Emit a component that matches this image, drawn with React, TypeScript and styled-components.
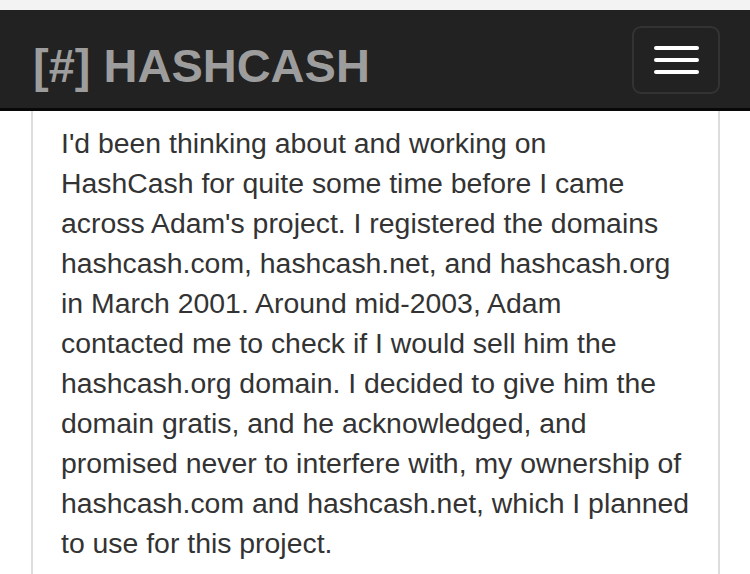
import React from "react";
import styled, { createGlobalStyle } from "styled-components";

const Global = createGlobalStyle`
  html, body { margin: 0; padding: 0; background: #ffffff; }
  body { font-family: "Liberation Sans", Arial, Helvetica, sans-serif; overflow: hidden; }
`;

const TopStrip = styled.div`
  height: 10px;
  background: #f3f3f3;
`;

const Navbar = styled.header`
  height: 98px;
  background: #222222;
  border-bottom: 3px solid #080808;
  display: flex;
  align-items: flex-start;
  justify-content: space-between;
  padding: 0 30px 0 33px;
`;

const Brand = styled.a`
  margin-top: 32px;
  font-size: 47px;
  line-height: 47px;
  font-weight: 700;
  color: #9d9d9d;
  text-decoration: none;
  white-space: nowrap;
`;

const Toggle = styled.button`
  margin-top: 16px;
  width: 88px;
  height: 68px;
  box-sizing: border-box;
  border: 2px solid #333333;
  border-radius: 9px;
  background: transparent;
  display: flex;
  flex-direction: column;
  align-items: center;
  justify-content: center;
  gap: 8px;
  padding: 0;
`;

const IconBar = styled.span`
  display: block;
  width: 45px;
  height: 4px;
  border-radius: 2px;
  background: #ffffff;
`;

const Content = styled.main`
  margin-left: 31px;
  width: 689px;
  box-sizing: border-box;
  border-left: 2px solid #dddddd;
  border-right: 2px solid #dddddd;
  padding: 12px 0 40px 28px;
  min-height: 600px;
`;

const Para = styled.p`
  margin: 0;
  font-size: 28.4px;
  line-height: 40px;
  color: #333333;
  white-space: nowrap;
`;

const lines = [
  "I'd been thinking about and working on",
  "HashCash for quite some time before I came",
  "across Adam's project. I registered the domains",
  "hashcash.com, hashcash.net, and hashcash.org",
  "in March 2001. Around mid-2003, Adam",
  "contacted me to check if I would sell him the",
  "hashcash.org domain. I decided to give him the",
  "domain gratis, and he acknowledged, and",
  "promised never to interfere with, my ownership of",
  "hashcash.com and hashcash.net, which I planned",
  "to use for this project.",
];

export default function App() {
  return (
    <>
      <Global />
      <TopStrip />
      <Navbar>
        <Brand href="#">[#] HASHCASH</Brand>
        <Toggle aria-label="Toggle navigation">
          <IconBar />
          <IconBar />
          <IconBar />
        </Toggle>
      </Navbar>
      <Content>
        <Para>
          {lines.map((l, i) => (
            <React.Fragment key={i}>
              {l}
              {i < lines.length - 1 && <br />}
            </React.Fragment>
          ))}
        </Para>
      </Content>
    </>
  );
}
